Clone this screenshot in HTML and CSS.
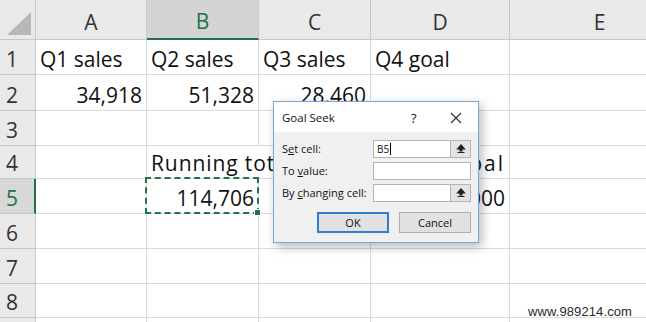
FILE: index.html
```html
<!DOCTYPE html>
<html lang="en">
<head>
    <meta charset="UTF-8">
    <link rel="stylesheet" href="styles.css">
    <title>Goal Seek</title>
</head>
<body>
    <div class="sheet">
        <!-- column headers -->
        <div class="hd corner"><span class="tri"></span></div>
        <div class="hd col">A</div>
        <div class="hd col active">B</div>
        <div class="hd col">C</div>
        <div class="hd col">D</div>
        <div class="hd col">E</div>

        <div class="hd row">1</div>
        <div class="cell">Q1 sales</div>
        <div class="cell">Q2 sales</div>
        <div class="cell">Q3 sales</div>
        <div class="cell">Q4 goal</div>
        <div class="cell"></div>

        <div class="hd row">2</div>
        <div class="cell num">34,918</div>
        <div class="cell num">51,328</div>
        <div class="cell num">28,460</div>
        <div class="cell"></div>
        <div class="cell"></div>

        <div class="hd row">3</div>
        <div class="cell"></div>
        <div class="cell"></div>
        <div class="cell"></div>
        <div class="cell"></div>
        <div class="cell"></div>

        <div class="hd row">4</div>
        <div class="cell"></div>
        <div class="cell spill">Running total</div>
        <div class="cell"></div>
        <div class="cell wide">Target goal</div>
        <div class="cell"></div>

        <div class="hd row active">5</div>
        <div class="cell"></div>
        <div class="cell num copied">114,706</div>
        <div class="cell"></div>
        <div class="cell num">150,000</div>
        <div class="cell"></div>

        <div class="hd row">6</div>
        <div class="cell"></div>
        <div class="cell"></div>
        <div class="cell"></div>
        <div class="cell"></div>
        <div class="cell"></div>

        <div class="hd row">7</div>
        <div class="cell"></div>
        <div class="cell"></div>
        <div class="cell"></div>
        <div class="cell"></div>
        <div class="cell"></div>

        <div class="hd row">8</div>
        <div class="cell"></div>
        <div class="cell"></div>
        <div class="cell"></div>
        <div class="cell"></div>
        <div class="cell"></div>

        <div class="hd row"></div>
        <div class="cell"></div>
        <div class="cell"></div>
        <div class="cell"></div>
        <div class="cell"></div>
        <div class="cell"></div>
    </div>

    <div class="dialog">
        <div class="title-bar">
            <span class="title">Goal Seek</span>
            <span class="help">?</span>
            <svg class="close" width="12" height="12" viewBox="0 0 12 12">
                <path d="M1 1 L11 11 M11 1 L1 11" stroke="#333" stroke-width="1.2" fill="none"/>
            </svg>
        </div>
        <div class="dialog-body">
            <div class="field">
                <label>S<u>e</u>t cell:</label>
                <div class="box">
                    <span class="value">B5<span class="caret"></span></span>
                    <span class="ref">
                        <svg width="10" height="10" viewBox="0 0 10 10"><path d="M5 1 L8.5 5 H6 V7 H4 V5 H1.5 Z M1.5 8.5 H8.5" stroke="#222" stroke-width="1.2" fill="#222"/></svg>
                    </span>
                </div>
            </div>
            <div class="field">
                <label>To <u>v</u>alue:</label>
                <div class="box"></div>
            </div>
            <div class="field">
                <label>By <u>c</u>hanging cell:</label>
                <div class="box">
                    <span class="value"></span>
                    <span class="ref">
                        <svg width="10" height="10" viewBox="0 0 10 10"><path d="M5 1 L8.5 5 H6 V7 H4 V5 H1.5 Z M1.5 8.5 H8.5" stroke="#222" stroke-width="1.2" fill="#222"/></svg>
                    </span>
                </div>
            </div>
            <div class="buttons">
                <button class="btn default">OK</button>
                <button class="btn">Cancel</button>
            </div>
        </div>
    </div>

    <div class="watermark">www.989214.com</div>
</body>
</html>
```

FILE: styles.css
```css
/* Global */
body {
    margin: 0;
    overflow: hidden;
    background: #ffffff;
    font-family: 'Open Sans', 'Noto Sans', sans-serif;
}

/* Sheet grid */
.sheet {
    display: grid;
    width: 646px;
    height: 322px;
    overflow: hidden;
    grid-template-columns: 36px 111px 112px 112px 139px 180px;
    grid-template-rows: 40px 35px 36px 35px 33px 35px 35px 35px 34px 30px;
}

.sheet > div {
    box-sizing: border-box;
    border-right: 1px solid #dadada;
    border-bottom: 1px solid #dadada;
    white-space: nowrap;
    min-width: 0;
}

.hd {
    background-color: #e9e9e9;
    color: #333;
    font-size: 21px;
    border-color: #c8c8c8 !important;
}

.corner {
    position: relative;
}

.corner .tri {
    position: absolute;
    right: 4px;
    bottom: 4px;
    width: 0;
    height: 0;
    border-left: 24px solid transparent;
    border-bottom: 23px solid #b7b7b7;
}

.hd.col {
    display: flex;
    align-items: center;
    justify-content: center;
    padding-top: 4px;
}

.hd.col.active {
    background-color: #d4d4d4;
    color: #217346;
    border-bottom: 2px solid #217346 !important;
}

.hd.row {
    display: flex;
    align-items: flex-end;
    padding-left: 6px;
    padding-bottom: 1px;
}

.hd.row.active {
    background-color: #d8d8d8;
    color: #217346;
    border-right: 2px solid #217346 !important;
}

.cell {
    display: flex;
    align-items: flex-end;
    padding: 0 4px 1px 4px;
    font-size: 21px;
    color: #111;
    line-height: 28px;
}

.cell.num {
    justify-content: flex-end;
}

.cell.spill {
    border-right-color: transparent !important;
    overflow: visible;
    letter-spacing: 0.9px;
}

.cell.wide {
    letter-spacing: 1.9px;
}

.cell.copied {
    position: relative;
}

.cell.copied::after {
    content: "";
    position: absolute;
    left: -2px;
    top: -2px;
    right: -1px;
    bottom: -1px;
    border: 2px dashed #217346;
}

.cell.copied::before {
    content: "";
    position: absolute;
    right: -3px;
    bottom: -3px;
    width: 5px;
    height: 5px;
    background: #217346;
    border: 1px solid #fff;
    z-index: 1;
}

/* Dialog */
.dialog {
    position: absolute;
    left: 273px;
    top: 101px;
    width: 206px;
    height: 142px;
    box-sizing: border-box;
    border: 1px solid #78a5da;
    background-color: #f0f0f0;
    box-shadow: 3px 4px 10px rgba(0, 0, 0, 0.28);
    font-size: 11px;
    color: #111;
}

.title-bar {
    height: 30px;
    background: #ffffff;
    display: flex;
    align-items: center;
    padding-left: 8px;
    position: relative;
}

.title {
    font-size: 11.5px;
}

.help {
    position: absolute;
    left: 137px;
    top: 7px;
    font-size: 13px;
}

.close {
    position: absolute;
    left: 176px;
    top: 10px;
}

.dialog-body {
    padding: 7px 7px 0 8px;
}

.field {
    display: flex;
    align-items: center;
    height: 19px;
    margin-bottom: 3px;
}

.field label {
    width: 91px;
    font-size: 11px;
}

.box {
    flex: 1;
    height: 18px;
    box-sizing: border-box;
    border: 1px solid #b4b4b4;
    background: #ffffff;
    display: flex;
}

.box .value {
    flex: 1;
    padding-left: 3px;
    font-size: 10px;
    line-height: 16px;
    display: flex;
    align-items: center;
}

.caret {
    display: inline-block;
    width: 1px;
    height: 12px;
    background: #000;
    margin-left: 1px;
}

.ref {
    width: 19px;
    background: #e4e4e4;
    border-left: 1px solid #b4b4b4;
    display: flex;
    align-items: center;
    justify-content: center;
}

.buttons {
    display: flex;
    justify-content: flex-end;
    gap: 10px;
    margin-top: 10px;
}

.btn {
    width: 72px;
    height: 21px;
    box-sizing: border-box;
    background: #e1e1e1;
    border: 1px solid #adadad;
    font-family: 'Open Sans', 'Noto Sans', sans-serif;
    font-size: 11px;
    color: #111;
    padding: 0;
}

.btn.default {
    border: 2px solid #2f7fd1;
}

/* Watermark */
.watermark {
    position: absolute;
    right: 14px;
    bottom: 3px;
    font-family: 'Liberation Sans', Arial, sans-serif;
    font-size: 13px;
    letter-spacing: 0.1px;
    color: #2a2a2a;
}
```
